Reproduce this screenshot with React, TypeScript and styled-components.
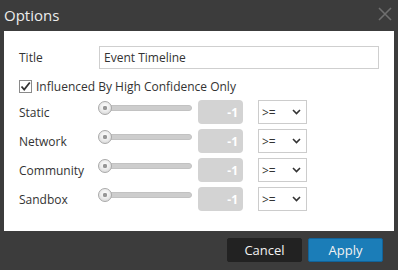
import React, { useState } from 'react';
import styled, { createGlobalStyle } from 'styled-components';

const GlobalStyle = createGlobalStyle`
    html, body {
        margin: 0;
        padding: 0;
        background: #3c3c3c;
    }
    body {
        font-family: 'Open Sans', 'Liberation Sans', sans-serif;
    }
`;

const Dialog = styled.div`
    width: 398px;
    height: 270px;
    background: #3c3c3c;
    display: flex;
    flex-direction: column;
`;

const Header = styled.div`
    height: 31px;
    display: flex;
    align-items: center;
    justify-content: space-between;
    padding: 0 5px 0 4px;
    box-sizing: border-box;
`;

const HeaderTitle = styled.div`
    color: #ececec;
    font-size: 15px;
    line-height: 31px;
`;

const CloseButton = styled.button`
    width: 16px;
    height: 16px;
    padding: 0;
    border: none;
    background: transparent;
    display: flex;
    align-items: center;
    justify-content: center;
    margin-top: -3px;
    cursor: pointer;
`;

const Body = styled.div`
    margin: 0 4px;
    height: 200px;
    background: #ffffff;
    padding: 15px 15px 0 15px;
    box-sizing: border-box;
    display: flex;
    flex-direction: column;
`;

const FieldRow = styled.div`
    display: flex;
    align-items: center;
    height: 23px;
`;

const Label = styled.label`
    width: 80px;
    flex-shrink: 0;
    color: #333;
    font-size: 12px;
`;

const TextInput = styled.input`
    width: 280px;
    height: 23px;
    box-sizing: border-box;
    border: 1px solid #cfcfcf;
    padding: 0 4px;
    font-family: inherit;
    font-size: 12px;
    color: #333;
    outline: none;
`;

const CheckRow = styled.label`
    display: flex;
    align-items: center;
    gap: 4px;
    height: 20px;
    margin-top: 7px;
    margin-bottom: 4px;
    color: #333;
    font-size: 12px;
    cursor: pointer;
`;

const CheckBox = styled.span`
    width: 13px;
    height: 13px;
    box-sizing: border-box;
    border: 1px solid #8a8a8a;
    background: #fff;
    display: flex;
    align-items: center;
    justify-content: center;
`;

const Rows = styled.div`
    display: flex;
    flex-direction: column;
    gap: 5px;
`;

const ScoreRow = styled.div`
    display: flex;
    align-items: center;
    height: 24px;
`;

const Slider = styled.div`
    position: relative;
    width: 94px;
    height: 14px;
    align-self: flex-start;
    margin-top: 1px;
    margin-left: -1px;
    flex-shrink: 0;
`;

const Track = styled.div`
    position: absolute;
    left: 6px;
    right: 0;
    top: 4px;
    height: 6px;
    border-radius: 3px;
    background: #cdcdcd;
    border: 1px solid #c2c2c2;
    box-sizing: border-box;
`;

const Thumb = styled.div<{ $pos: number }>`
    position: absolute;
    top: 0;
    left: ${p => p.$pos}px;
    width: 14px;
    height: 14px;
    border-radius: 50%;
    box-sizing: border-box;
    border: 1px solid #a9a9a9;
    background: radial-gradient(circle at 50% 40%, #ffffff 0%, #eeeeee 45%, #cfcfcf 100%);
    display: flex;
    align-items: center;
    justify-content: center;

    &::after {
        content: '';
        width: 4px;
        height: 4px;
        border-radius: 50%;
        background: #9a9a9a;
        box-shadow: inset 0 0 1px #666;
    }
`;

const NumberBox = styled.div`
    width: 45px;
    height: 24px;
    margin-left: 6px;
    border-radius: 4px;
    background: #d3d3d3;
    color: #ffffff;
    font-size: 12px;
    font-weight: 700;
    display: flex;
    align-items: center;
    justify-content: flex-end;
    padding-right: 5px;
    box-sizing: border-box;
`;

const Select = styled.div`
    width: 49px;
    height: 24px;
    margin-left: 15px;
    box-sizing: border-box;
    border: 1px solid #cccccc;
    background: #fff;
    display: flex;
    align-items: center;
    justify-content: space-between;
    padding: 0 5px 0 3px;
    font-size: 12px;
    color: #333;
`;

const Footer = styled.div`
    flex: 1;
    display: flex;
    align-items: center;
    justify-content: flex-end;
    gap: 6px;
    padding: 0 15px 1px 0;
`;

const Button = styled.button<{ $primary?: boolean }>`
    width: 75px;
    height: 24px;
    border: 1px solid ${p => (p.$primary ? '#11639a' : '#222222')};
    background: ${p => (p.$primary ? '#1b7db8' : '#222222')};
    color: #f2f2f2;
    font-family: inherit;
    font-size: 13px;
    border-radius: 2px;
    cursor: pointer;
    padding: 0;
`;

const categories = ['Static', 'Network', 'Community', 'Sandbox'];

const App = () => {
    const [title, setTitle] = useState('Event Timeline');
    const [highOnly, setHighOnly] = useState(true);

    return (
        <Dialog>
            <GlobalStyle />
            <Header>
                <HeaderTitle>Options</HeaderTitle>
                <CloseButton>
                    <svg width="14" height="14" viewBox="0 0 14 14">
                        <path d="M1 1 L13 13 M13 1 L1 13" stroke="#6f6f6f" strokeWidth="1.6" />
                    </svg>
                </CloseButton>
            </Header>
            <Body>
                <FieldRow>
                    <Label>Title</Label>
                    <TextInput value={title} onChange={e => setTitle(e.target.value)} />
                </FieldRow>
                <CheckRow onClick={() => setHighOnly(!highOnly)}>
                    <CheckBox>
                        {highOnly && (
                            <svg width="11" height="11" viewBox="0 0 11 11">
                                <path d="M1.5 5.5 L4.2 8.5 L9.8 1.5" fill="none" stroke="#333" strokeWidth="1.8" />
                            </svg>
                        )}
                    </CheckBox>
                    Influenced By High Confidence Only
                </CheckRow>
                <Rows>
                    {categories.map(name => (
                        <ScoreRow key={name}>
                            <Label>{name}</Label>
                            <Slider>
                                <Track />
                                <Thumb $pos={0} />
                            </Slider>
                            <NumberBox>-1</NumberBox>
                            <Select>
                                <span>&gt;=</span>
                                <svg width="9" height="6" viewBox="0 0 9 6">
                                    <path d="M1 1 L4.5 4.5 L8 1" fill="none" stroke="#333" strokeWidth="1.6" />
                                </svg>
                            </Select>
                        </ScoreRow>
                    ))}
                </Rows>
            </Body>
            <Footer>
                <Button>Cancel</Button>
                <Button $primary>Apply</Button>
            </Footer>
        </Dialog>
    );
};

export default App;
